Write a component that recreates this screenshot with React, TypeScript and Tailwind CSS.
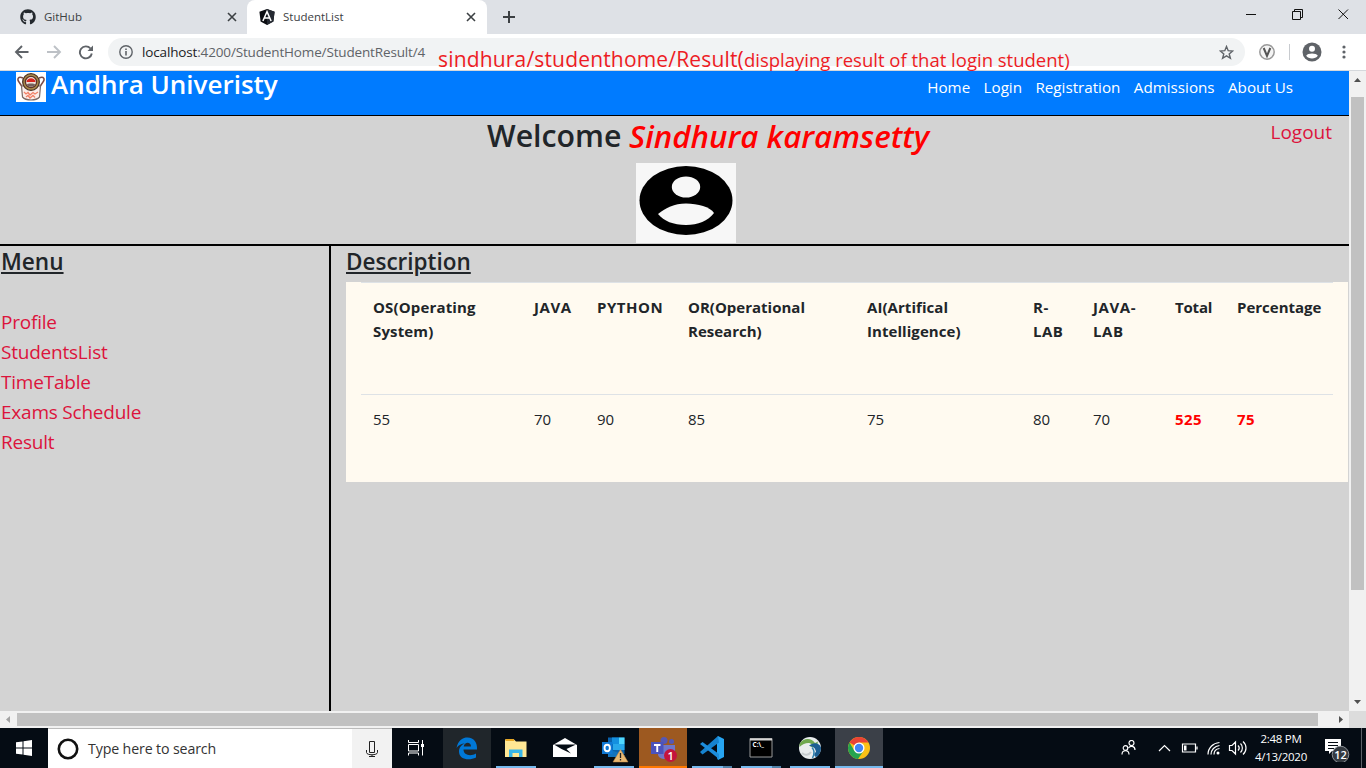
import React from "react";
import { FaGithub } from "react-icons/fa";

const ui = "font-['Open_Sans','Noto_Sans',sans-serif]";

function Tab({ icon, title, active }: { icon: React.ReactNode; title: string; active?: boolean }) {
  return (
    <div className={active ? "flex h-[34px] w-[240px] items-center rounded-t-lg bg-white pl-3" : "flex h-[34px] w-[247px] items-center pl-5"}>
      {icon}
      <span className="ml-2 flex-1 text-[11.5px] leading-4 text-[#3c4043]">{title}</span>
      <svg className={active ? "mr-[10px] h-3 w-3" : "mr-[9px] h-3 w-3"} viewBox="0 0 12 12" stroke="#3c4043" strokeWidth="1.6">
        <path d="M2 2L10 10M10 2L2 10" />
      </svg>
    </div>
  );
}

function AngularIcon() {
  return (
    <svg className="h-4 w-4" viewBox="0 0 16 16">
      <path d="M8 0L15.6 2.7L14.4 12.6L8 16L1.6 12.6L0.4 2.7Z" fill="#0b0d12" />
      <path d="M8 0L15.6 2.7L14.4 12.6L8 16Z" fill="#252a32" />
      <path d="M3.9 12L8 2.6L12.1 12M5.7 9H10.3" fill="none" stroke="#fff" strokeWidth="1.5" />
    </svg>
  );
}

function TabStrip() {
  return (
    <div className="flex h-[34px] bg-[#dee1e6]">
      <Tab title="GitHub" icon={<FaGithub className="h-4 w-4 text-[#24292e]" />} />
      <Tab title="StudentList" active icon={<AngularIcon />} />
      <svg className="mt-[10px] ml-[15px] h-[14px] w-[14px]" viewBox="0 0 14 14" stroke="#3c4043" strokeWidth="2">
        <path d="M7 1V13M1 7H13" />
      </svg>
      <div className="ml-auto flex w-[120px] items-start pt-[9px]">
        <svg className="h-[11px] w-[110px]" viewBox="0 0 110 11" fill="none" stroke="#111" strokeWidth="1">
          <path d="M0 5.5H10M46.5 2.5H54.500V10.500H46.5ZM48.500 2.5V0.500H56.500V8.500H54.500M92.500 0.500L102 10M102 0.500L92.500 10" />
        </svg>
      </div>
    </div>
  );
}

function Toolbar() {
  return (
    <div className="flex h-[37px] items-center border-b border-[#d5d8dc] bg-white">
      <svg className="ml-[14px] h-4 w-[82px]" viewBox="0 0 82 16" fill="none" strokeWidth="1.900">
        <path d="M14.500 8H2M8 2L2 8L8 14" stroke="#5f6368" />
        <path d="M33 8H46M40 2L46 8L40 14" stroke="#bdc1c6" />
        <path d="M76.500 4.500A6 6 0 1 0 77.800 9.500" stroke="#5f6368" />
        <path d="M79 1.500V7H73.500Z" fill="#5f6368" />
      </svg>
      <div className="ml-3 flex h-7 w-[1137px] items-center rounded-full bg-[#f1f3f4] pl-[11px]">
        <svg className="h-[14px] w-[14px]" viewBox="0 0 14 14" fill="none" stroke="#5f6368">
          <circle cx="7" cy="7" r="6.200" strokeWidth="1.400" />
          <path d="M7 6V10.500M7 3.500V5" strokeWidth="1.600" />
        </svg>
        <span className="ml-[9px] text-[13.5px] leading-5 tracking-[-0.15px] whitespace-nowrap text-[#5f6368]">
          <span className="text-[#202124]">localhost</span>:4200/StudentHome/StudentResult/4
        </span>
        <svg className="mr-[11px] ml-auto h-[15px] w-[15px]" viewBox="0 0 15 15" fill="none" stroke="#5f6368" strokeWidth="1.400">
          <path d="M7.500 1.500L9.200 5.700L13.700 6L10.200 8.900L11.400 13.300L7.500 10.900L3.600 13.300L4.800 8.900L1.300 6L5.800 5.700Z" />
        </svg>
      </div>
      <svg className="ml-[14px] h-4 w-4" viewBox="0 0 16 16" fill="none">
        <circle cx="8" cy="8" r="7.200" stroke="#999" strokeWidth="1.500" fill="#f4f4f4" />
        <path d="M4.700 4L8 12L11.300 4" stroke="#555" strokeWidth="2" />
      </svg>
      <div className="ml-[14px] h-4 w-px bg-[#c8cbcf]" />
      <svg className="ml-3 h-5 w-5" viewBox="0 0 20 20">
        <circle cx="10" cy="10" r="9.500" fill="#5f6368" />
        <circle cx="10" cy="6.800" r="3" fill="#fff" />
        <path d="M4.200 13.800C5.500 10.800 14.500 10.800 15.800 13.800C13.500 17.500 6.500 17.500 4.200 13.800Z" fill="#fff" />
      </svg>
      <svg className="ml-5 h-[14px] w-1" viewBox="0 0 4 14" fill="#5f6368">
        <circle cx="2" cy="2" r="1.600" /><circle cx="2" cy="7" r="1.600" /><circle cx="2" cy="12" r="1.600" />
      </svg>
    </div>
  );
}

function Crest() {
  return (
    <svg className="h-[30px] w-[30px]" viewBox="0 0 30 30">
      <path d="M0 0H30V30H0Z" fill="#fff" />
      <path d="M7 6C2 4 0.800 7 3 10L7 16M23 6C28 4 29.200 7 27 10L23 16" fill="none" stroke="#7c4b45" strokeWidth="1.500" />
      <path d="M5.500 14L6.500 25C10 29 20 29 23.500 25L24.500 14Z" fill="#fbeeea" stroke="#7b6a66" strokeWidth="1.200" />
      <circle cx="15" cy="10" r="8.300" fill="#a98a4a" stroke="#4d3426" strokeWidth="1.300" />
      <circle cx="15" cy="10" r="5.600" fill="#eee0da" stroke="#5d3328" strokeWidth="1.300" />
      <path d="M10.500 10C11 5 19 5 19.500 10Z" fill="#db2720" />
      <path d="M10.500 12.500C12 11 18 11 19.500 12.500C18 15.500 12 15.500 10.500 12.500Z" fill="#75605a" />
      <path d="M8 20L10 22L12 20.500L14 23L17 20.500L19 22L22 20M10 25L12 23.500L14 26L17 23.500L19 25.500" fill="none" stroke="#f28066" strokeWidth="1.300" />
    </svg>
  );
}

function SiteHeader() {
  return (
    <header className="flex h-[45px] items-start border-b border-black bg-[#007bff] pl-4 text-white">
      <div className="mt-px"><Crest /></div>
      <h1 className="-mt-px ml-[5px] text-[26px] leading-[28px] font-semibold whitespace-nowrap">Andhra Univeristy</h1>
      <nav className="mt-1 mr-[56px] ml-auto flex gap-[13.4px] text-[15.2px] leading-6 whitespace-nowrap">
        <a>Home</a>
        <a>Login</a>
        <a>Registration</a>
        <a>Admissions</a>
        <a>About Us</a>
      </nav>
    </header>
  );
}

function Welcome() {
  return (
    <section className="flex h-[130px] items-start border-b-2 border-black">
      <div className="w-[1240px]">
        <h2 className="flex h-[47px] pt-px pl-[487px] leading-[38px] font-semibold whitespace-nowrap text-[#212529]">
          <span className="w-[142px] text-[30.3px]">Welcome</span>
          <span className="text-[31.3px] text-[#f00] italic">Sindhura karamsetty</span>
        </h2>
        <svg className="ml-[636px] h-20 w-[100px]" viewBox="0 0 100 80">
          <path d="M0 0H100V80H0Z" fill="#f7f7f7" />
          <ellipse cx="50" cy="37.500" rx="46.500" ry="34.500" />
          <ellipse cx="50" cy="24" rx="14.200" ry="10.500" fill="#f7f7f7" />
          <path d="M22 51C30 45 38 40.500 50 40.500C62 40.500 74 44 78 50C72 58 62 62 50 62C37 62 28 58 22 51Z" fill="#f7f7f7" />
        </svg>
      </div>
      <a className="mt-px mr-[17px] ml-auto text-[19px] leading-[30px] text-[#dc143c]">Logout</a>
    </section>
  );
}

const columns = [
  { head: ["OS(Operating", "System)"], value: "55", fit: "tracking-[0.15px]" },
  { head: ["JAVA"], value: "70", fit: "tracking-[0.6px]" },
  { head: ["PYTHON"], value: "90", fit: "tracking-[0.5px]" },
  { head: ["OR(Operational", "Research)"], value: "85", fit: "" },
  { head: ["AI(Artifical", "Intelligence)"], value: "75", fit: "tracking-[0.06px]" },
  { head: ["R-", "LAB"], value: "80", fit: "tracking-[0.5px]" },
  { head: ["JAVA-", "LAB"], value: "70", fit: "tracking-[0.6px]" },
  { head: ["Total"], value: "525", fit: "tracking-[-0.2px]", strong: true },
  { head: ["Percentage"], value: "75", fit: "", strong: true },
];

function Results() {
  const grid = "grid grid-cols-[161px_63px_91px_179px_166px_60px_82px_62px_96px] border-t border-[#dee2e6] pt-3 pl-3 text-[15px] leading-6";
  return (
    <div className="mr-px h-[200px] bg-[#fffaf0] px-[15px]">
      <div className={grid + " h-[112px] font-bold"}>
        {columns.map((c, i) => (
          <div key={i} className={c.fit}>{c.head.map((h) => <div key={h}>{h}</div>)}</div>
        ))}
      </div>
      <div className={grid}>
        {columns.map((c, i) => (
          <div key={i} className={c.strong ? "font-bold tracking-[0.4px] text-[#f00]" : "tracking-[-0.1px]"}>{c.value}</div>
        ))}
      </div>
    </div>
  );
}

function Page() {
  return (
    <main className="flex h-[640px] w-[1349px] flex-col bg-[#d3d3d3] text-[#212529]">
      <SiteHeader />
      <Welcome />
      <div className="flex flex-1">
        <aside className="w-[331px] shrink-0 border-r-2 border-black pl-px">
          <h3 className="h-[61px] text-[22.6px] leading-[31px] font-semibold underline">Menu</h3>
          <ul className="text-[19px] leading-[30px] tracking-[-0.22px] text-[#dc143c]">
            <li>Profile</li>
            <li>StudentsList</li>
            <li>TimeTable</li>
            <li>Exams Schedule</li>
            <li>Result</li>
          </ul>
        </aside>
        <div className="min-w-0 flex-1 pl-[15px]">
          <h3 className="h-9 text-[22.5px] leading-[31px] font-semibold underline">Description</h3>
          <Results />
        </div>
      </div>
    </main>
  );
}

function VScroll() {
  return (
    <div className="flex h-[640px] w-[17px] flex-col items-center bg-[#f1f1f1]">
      <svg className="h-[26px] w-[17px]" viewBox="0 0 17 26"><path d="M5 11L8.500 7L12 11Z" fill="#505050" /></svg>
      <div className="h-[493px] w-[13px] bg-[#c1c1c1]" />
      <svg className="mt-auto h-[17px] w-[17px]" viewBox="0 0 17 17"><path d="M5 6L8.500 10L12 6Z" fill="#505050" /></svg>
    </div>
  );
}

function HScroll() {
  return (
    <div className="flex h-[17px] items-center bg-[#f1f1f1]">
      <svg className="h-[17px] w-[17px]" viewBox="0 0 17 17"><path d="M10 5L6 8.500L10 12Z" fill="#a3a3a3" /></svg>
      <div className="h-[13px] w-[1301px] bg-[#c1c1c1]" />
      <svg className="ml-[14px] h-[17px] w-[17px]" viewBox="0 0 17 17"><path d="M7 5L11 8.500L7 12Z" fill="#505050" /></svg>
      <div className="h-[17px] w-[17px] bg-[#dcdcdc]" />
    </div>
  );
}

function TaskButton({ children, bg, line }: { children: React.ReactNode; bg?: string; line?: "full" | "wide" | "stack" | "alert" }) {
  return (
    <div className={"mr-px flex h-10 w-12 flex-col items-center " + (bg || "")}>
      <svg className="mt-[7px] h-[28px] w-[32px] shrink-0" viewBox="0 0 32 28">{children}</svg>
      {line === "full" && <div className="mt-auto h-0.5 w-10 bg-[#76b9ed]" />}
      {line === "wide" && <div className="mt-auto h-0.5 w-12 bg-[#76b9ed]" />}
      {line === "alert" && <div className="mt-auto h-0.5 w-12 bg-[#ff7800]" />}
      {line === "stack" && (
        <div className="mt-auto flex h-0.5 w-10"><div className="w-[31px] bg-[#76b9ed]" /><div className="w-[9px] bg-[#5182a8]" /></div>
      )}
    </div>
  );
}

function Taskbar() {
  return (
    <footer className="flex h-10 bg-[#050c14] text-white">
      <div className="flex w-12 items-center justify-center">
        <svg className="h-4 w-4" viewBox="0 0 16 16" fill="#fff">
          <path d="M0 2.300L6.500 1.400V7.500H0ZM7.500 1.200L16 0V7.500H7.500ZM0 8.500H6.500V14.600L0 13.700ZM7.500 8.500H16V16L7.500 14.800Z" />
        </svg>
      </div>
      <div className="flex w-[344px] items-center border-t border-[#bbb] bg-white">
        <svg className="ml-[9px] h-[22px] w-[22px]" viewBox="0 0 22 22" fill="none">
          <circle cx="11" cy="11" r="9.200" stroke="#111" strokeWidth="2.600" />
        </svg>
        <span className="ml-[9px] flex-1 text-[14.2px] tracking-[-0.13px] text-[#333]">Type here to search</span>
        <div className="flex h-[39px] w-10 items-center justify-center bg-[#f2f2f2]">
          <svg className="h-4 w-3" viewBox="0 0 12 16" fill="none" stroke="#222">
            <path d="M3.500 0.500H8.500V11.500H3.500ZM0.500 9V11.500C0.500 14.500 11.500 14.500 11.500 11.500V9M6 14V15.500M3 15.500H9" />
          </svg>
        </div>
      </div>
      <div className="mr-[3px] flex w-12 items-center justify-center">
        <svg className="h-4 w-4" viewBox="0 0 16 16" fill="none" stroke="#fff">
          <path d="M0.500 0V2.500H10.500V0M0.500 15.500V13H10.500V15.500M0.500 4.500H10.500V11H0.500ZM14.500 0V15.500" />
          <path d="M13 4H16V7H13Z" fill="#fff" stroke="none" />
        </svg>
      </div>
      <TaskButton bg="bg-[#20262b]">
        <path d="M5.500 13C7 5 12 2.500 16.500 2.500C23 2.500 26.500 7.500 26 14.500H12.500C12.500 20.500 20 21.500 25 18.500V22.500C18 26 8 24.500 8 16.500C8 12.500 10.500 9.500 14 8.500C10.500 8.500 7.500 10 5.500 13ZM12.700 11.500H20C20 6.500 13.500 6.500 12.700 11.500Z" fill="#0078d7" />
      </TaskButton>
      <TaskButton line="full">
        <path d="M5 4.500H14L16 6.500H26.500V22H5Z" fill="#ffe794" />
        <path d="M5.500 4H14V6H5.500Z" fill="#e8a825" />
        <path d="M9 22V14.500H22.500V22H19V18H12.500V22Z" fill="#38b6e8" />
      </TaskButton>
      <TaskButton>
        <path d="M4 10L16 3L28 10V22H4Z" fill="#fff" />
        <path d="M5 9.500H27L17.500 14L22 18.500L12.500 14Z" fill="#050c14" />
      </TaskButton>
      <TaskButton line="full">
        <path d="M10 2.500H26.500V19H10Z" fill="#0a63ae" /><path d="M14 2.500H21V9H14Z" fill="#1490df" /><path d="M21 2.500H26.500V9H21Z" fill="#50d9ff" /><path d="M15 9H26.500V15H15Z" fill="#28a8ea" /><path d="M10 14L26.500 20V22H10Z" fill="#1473bd" />
        <path d="M4 7H14.500V19H4Z" fill="#0f78d4" />
        <ellipse cx="9.200" cy="13" rx="2.700" ry="3.200" fill="none" stroke="#fff" strokeWidth="1.900" />
        <path d="M22.500 14.500L30 27H15Z" fill="#e9b872" stroke="#c08740" strokeWidth="0.500" /><path d="M22.500 18V23M22.500 24V25.500" stroke="#222" strokeWidth="1.300" />
      </TaskButton>
      <TaskButton bg="bg-[#9d5920]" line="alert">
        <circle cx="17" cy="5.500" r="3.500" fill="#5558b5" /><circle cx="24.500" cy="6.500" r="2.500" fill="#5558b5" />
        <path d="M11 10H28V17C28 22 24 23 21 22C17 26 11 23 11 19Z" fill="#7076c9" />
        <path d="M4 7H16.500V19H4Z" fill="#4b53bc" />
        <path d="M7 10H13.500M10.250 10V17" stroke="#fff" strokeWidth="1.900" />
        <circle cx="23.500" cy="20.500" r="6.500" fill="#c4143c" />
        <text x="20.400" y="24.500" fontSize="11" fontWeight="600" fill="#fff">1</text>
      </TaskButton>
      <TaskButton line="stack">
        <path d="M22 1L28 4V22L22 25L21 23V3Z" fill="#27a5f2" />
        <path d="M22 1L4 17L6.500 19.500L23 7.500Z" fill="#1683cf" />
        <path d="M4 9L6.500 7L23 19V24Z" fill="#1c8ddc" />
      </TaskButton>
      <TaskButton line="stack">
        <path d="M5 3.500H27V22H5Z" fill="#000" stroke="#999" />
        <path d="M5 3.500H27V5.500H5Z" fill="#d5d5d5" />
        <text x="7.500" y="12" fontSize="6.500" fontWeight="700" fill="#fff">C:\_</text>
      </TaskButton>
      <TaskButton line="full">
        <circle cx="16" cy="13" r="11" fill="#e9edef" />
        <path d="M5.500 9C9 3 17 2 21 8L24 6.500L22.500 13L16 11.500L18.500 9.500C15 6.500 10 8 5.500 12Z" fill="#6fa84f" />
        <path d="M15 11C19 6.500 26 8 27 12.500C27 17 25 21 22 22C19.500 21 20 18 22 17C21.500 13 19 11 15 11Z" fill="#1b5f93" />
        <path d="M18 12.500C20.500 15 20.500 19 18.500 23" fill="none" stroke="#2d7fae" strokeWidth="1.500" />
        <path d="M8 18C11 21 15 20 17 17" fill="none" stroke="#c6cccf" strokeWidth="2" />
      </TaskButton>
      <TaskButton bg="bg-[#3b4048]" line="wide">
        <circle cx="16" cy="13" r="11" fill="#fbc116" />
        <path d="M16 13L6.500 7.500A11 11 0 0 1 25.500 7.500H16Z" fill="#ea4335" />
        <path d="M6.500 7.500A11 11 0 0 0 15 24L20.500 16L11.500 16Z" fill="#25a350" />
        <circle cx="16" cy="13" r="5.500" fill="#fff" /><circle cx="16" cy="13" r="4.200" fill="#4285f4" />
      </TaskButton>
      <div className="ml-auto flex items-center">
        <svg className="h-4 w-[126px]" viewBox="0 0 126 16" fill="none" stroke="#fff" strokeWidth="1.200">
          <circle cx="4.500" cy="8" r="2.300" /><path d="M1 14.500C1 9.500 8 9.500 8 14.500" />
          <circle cx="10.500" cy="3" r="2.500" /><path d="M7.500 8C9 5.500 14 5.500 14 10" />
          <path d="M38 11L43.500 5.500L49 11" />
          <path d="M61.500 4H74.500V12H61.500ZM76 6.500V9.500" /><path d="M63 5.500H65.500V10.500H63Z" fill="#fff" stroke="none" />
          <path d="M87 14.500C87 8 92 3 98.500 2.500M90 14.500C90 10 93.500 6 98.500 5.500M93 14.500C93 11.500 95 9 98.500 8.500" /><circle cx="97" cy="13" r="1.500" fill="#fff" stroke="none" />
          <path d="M108.500 5.500H111L114.500 2V14L111 10.500H108.500ZM117 5.500C118.500 7 118.500 9 117 10.500M119.500 3.500C122 6 122 10 119.500 12.500M122 1.500C126 5 126 11 122 14.500" />
        </svg>
        <div className="ml-[7px] flex w-[54px] flex-col items-center text-[11.5px] leading-[18px] tracking-tight whitespace-nowrap">
          <span>2:48 PM</span>
          <span>4/13/2020</span>
        </div>
        <svg className="ml-[17px] h-[28px] w-[26px]" viewBox="0 0 26 28">
          <path d="M0 5H16V17H7L4 20V17H0Z" fill="#fff" />
          <path d="M3 8.500H13M3 11.500H13M3 14.500H9" stroke="#050c14" />
          <circle cx="15.500" cy="20.500" r="8.300" fill="#343a40" stroke="#8c9298" />
          <text x="9.200" y="24.500" fontSize="11" fontWeight="600" fill="#fff">12</text>
        </svg>
        <div className="ml-[10px] h-10 w-px bg-[#5b6067]" />
        <div className="w-1" />
      </div>
    </footer>
  );
}

export default function App() {
  return (
    <div className={ui + " relative h-[768px] w-[1366px] overflow-hidden"}>
      <TabStrip />
      <Toolbar />
      <div className="flex"><Page /><VScroll /></div>
      <HScroll />
      <Taskbar />
      <p className="absolute top-[45px] left-[438px] flex items-baseline leading-7 whitespace-nowrap text-[#ed1c24]">
        <span className="text-[21px] tracking-[0.17px]">sindhura/studenthome/Result(</span>
        <span className="text-[18.5px]">displaying result of that login student)</span>
      </p>
    </div>
  );
}
